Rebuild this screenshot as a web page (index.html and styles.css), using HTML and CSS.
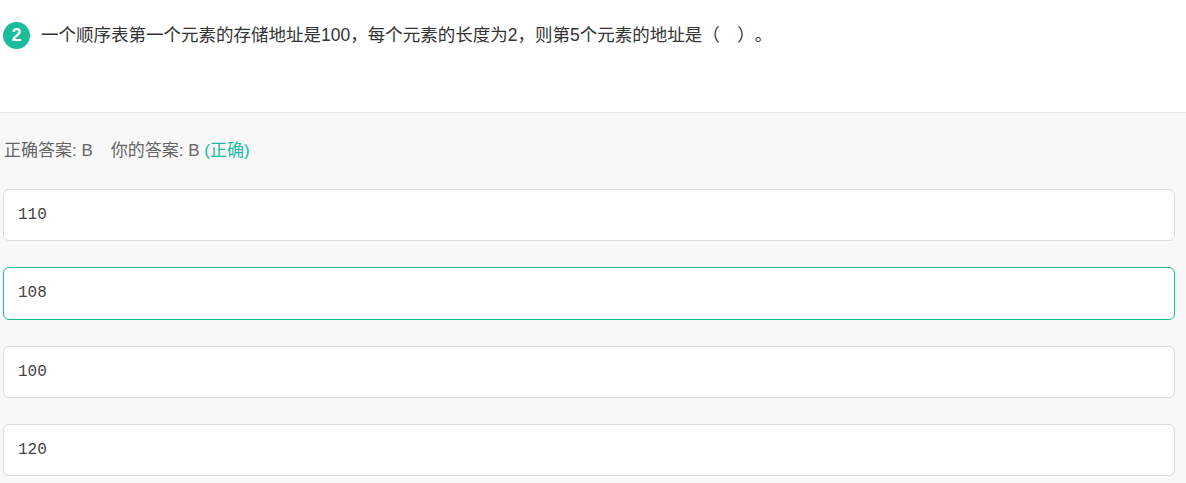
FILE: index.html
```html
<!DOCTYPE html>
<html>
<head>
<meta charset="utf-8">
<link rel="stylesheet" href="styles.css">
</head>
<body>
<div class="question">
  <span class="num">2</span>
  <span class="title">一个顺序表第一个元素的存储地址是100，每个元素的长度为2，则第5个元素的地址是（　）。</span>
</div>
<div class="answer">
  <div class="result">正确答案: B<span class="mine">你的答案: B <span class="ok">(正确)</span></span></div>
  <div class="options">
    <div class="opt">110</div>
    <div class="opt right">108</div>
    <div class="opt">100</div>
    <div class="opt">120</div>
  </div>
</div>
</body>
</html>
```
FILE: styles.css
```css
html, body { margin: 0; padding: 0; }
body {
  font-family: "Liberation Sans", "Noto Sans CJK SC", sans-serif;
  color: #333;
  background: #f8f8f8;
  height: 483px;
  overflow: hidden;
  text-spacing-trim: space-all;
  text-autospace: no-autospace;
}
.question {
  background: #fff;
  height: 113px;
  border-bottom: 1px solid #e6e6e6;
  display: flex;
  align-items: flex-start;
  padding: 22px 0 0 3px;
  box-sizing: border-box;
}
.num {
  width: 27px; height: 27px;
  border-radius: 50%;
  background: #1abc9c;
  color: #fff;
  font-size: 18px;
  font-weight: bold;
  line-height: 27px;
  text-align: center;
  flex: none;
}
.title {
  margin-left: 11px;
  font-size: 17.5px;
  line-height: 27px;
  color: #333;
}
.answer { padding: 26px 11px 0 3px; }
.result {
  font-size: 17px;
  line-height: 24px;
  color: #666;
  padding-left: 1px;
}
.mine { margin-left: 18px; }
.ok { color: #1abc9c; }
.options {
  margin-top: 26px;
  display: flex;
  flex-direction: column;
  gap: 26px;
}
.opt {
  height: 52px;
  box-sizing: border-box;
  border: 1px solid #ddd;
  border-radius: 6px;
  background: #fff;
  font-family: "Liberation Mono", monospace;
  font-size: 16px;
  line-height: 50px;
  padding-left: 14px;
  color: #444;
}
.opt.right { border-color: #1abc9c; height: 53px; }
```
